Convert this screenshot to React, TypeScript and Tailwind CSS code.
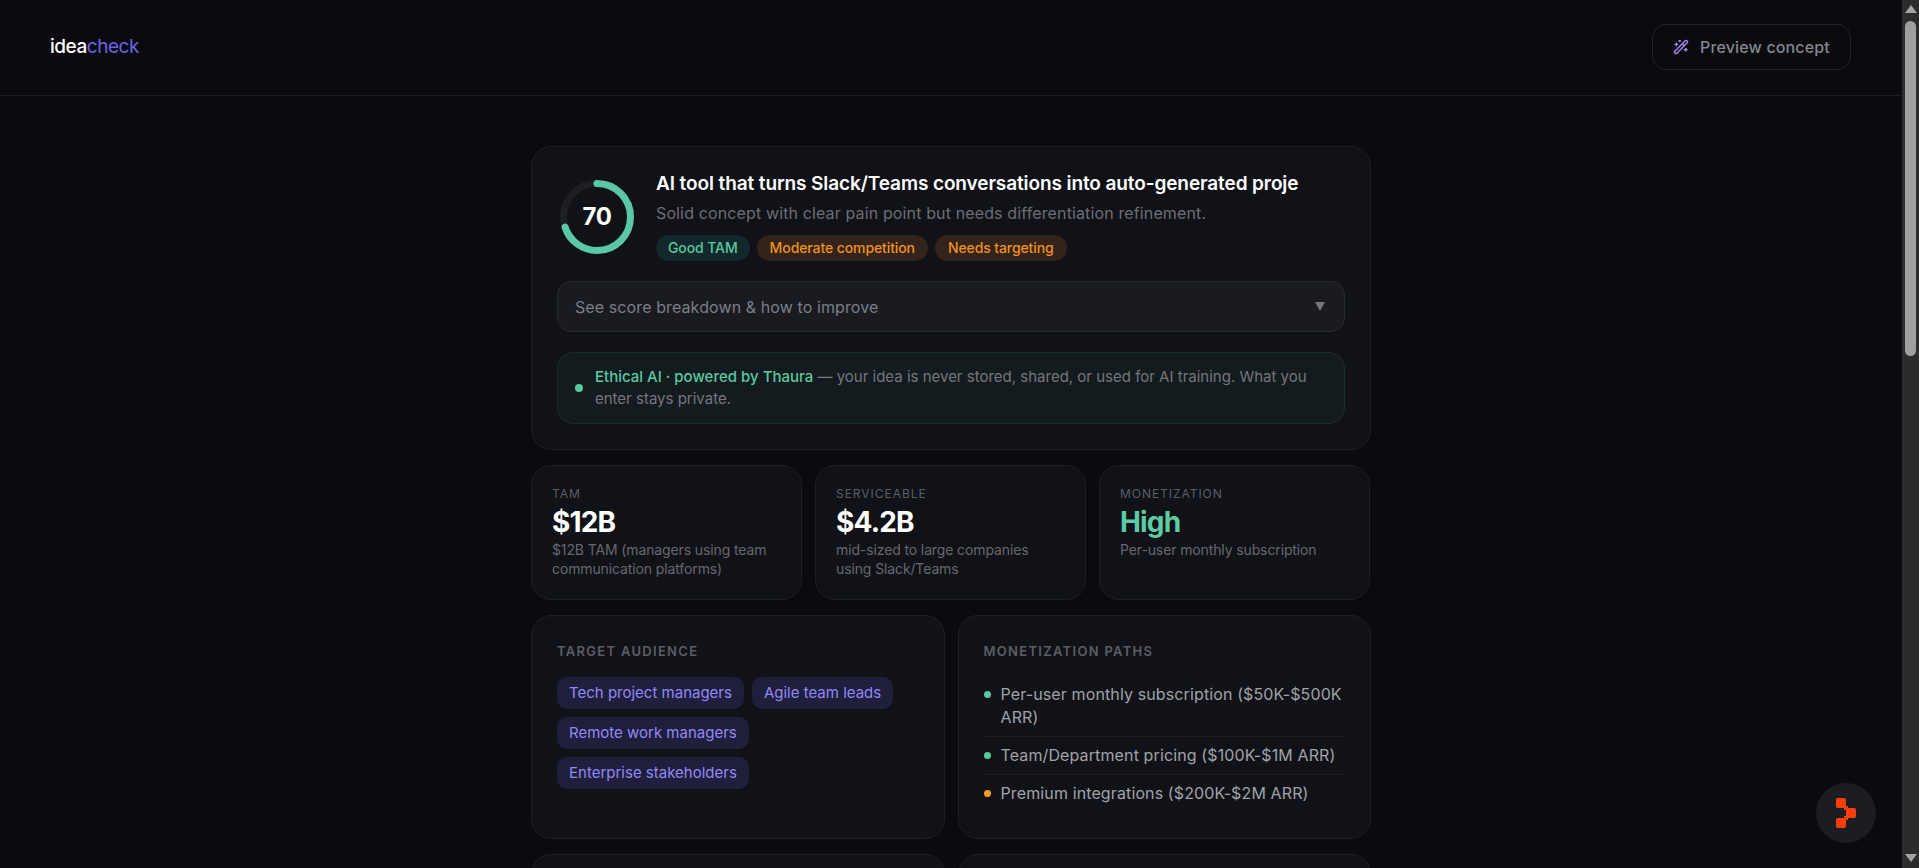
import { WandSparkles } from "lucide-react";

const card = "rounded-[20px] border border-[#1e2027] bg-[#111217]";
const sectionLabel = "text-[13px] font-semibold uppercase leading-[15px] tracking-[0.1em] text-[#5c5e66]";

function Stat({ label, value, note, green }: { label: string; value: string; note: string; green?: boolean }) {
  return (
    <div className={`${card} h-[135px] px-5 pt-[20px]`}>
      <div className="text-[12px] font-normal uppercase leading-[16px] tracking-[0.08em] text-[#5c5e66]">{label}</div>
      <div className={`mt-[4px] text-[28px] font-bold leading-[32px] tracking-[-0.03em] ${green ? "text-[#5ccba5]" : "text-white"}`}>{value}</div>
      <div className="mt-[2px] text-[14px] leading-[19px] tracking-[-0.12px] text-[#66686f]">{note}</div>
    </div>
  );
}

function Tag({ children }: { children: string }) {
  return <span className="rounded-[10px] bg-[#201f3b] px-3 py-[6px] text-[15px] leading-[20px] text-[#9188f7]">{children}</span>;
}

function Path({ text, color, last }: { text: string; color: string; last?: boolean }) {
  return (
    <div className={`flex items-start gap-[10px] py-[7px] ${last ? "" : "border-b border-[#1c1e24]"}`}>
      <span className={`mt-[8px] h-[7px] w-[7px] shrink-0 rounded-full ${color}`} />
      <span className="text-[16px] leading-[23px] tracking-[0.12px] text-[#a0a2a8]">{text}</span>
    </div>
  );
}

function Scrollbar() {
  return (
    <div className="fixed inset-y-0 right-0 flex w-[17px] flex-col items-center bg-[#2c2c2c]">
      <span className="mt-[5px] h-0 w-0 border-x-[6px] border-b-[8px] border-x-transparent border-b-[#a3a3a3]" />
      <span className="mt-[8px] h-[335px] w-[11px] rounded-full bg-[#9f9f9f]" />
      <span className="mt-auto mb-[6px] h-0 w-0 border-x-[6px] border-t-[8px] border-x-transparent border-t-[#a3a3a3]" />
    </div>
  );
}

export default function App() {
  return (
    <div className="min-h-[2150px] bg-[#0a0a0f] pr-[17px] font-['Inter',sans-serif]">
      <header className="flex h-[96px] items-center justify-between border-b border-[#1c1d23] pl-[50px] pr-[51px]">
        <div className="text-[19px] font-medium tracking-[-0.025em] text-white">
          idea<span className="font-normal text-[#6c63e6]">check</span>
        </div>
        <button className="mb-[1px] flex h-[46px] w-[199px] items-center justify-center gap-[11px] rounded-[14px] border border-[#24252c] text-[16px] font-medium tracking-[0.15px] text-[#85868c]">
          <WandSparkles size={16} className="text-[#a78bfa]" />
          Preview concept
        </button>
      </header>

      <main className="mx-auto flex w-[840px] flex-col gap-[15px] pt-[50px]">
        <section className={`${card} h-[304px] px-[25px] pt-[33px]`}>
          <div className="flex gap-[22px] pl-[3px]">
            <div className="relative h-[74px] w-[74px] shrink-0">
              <svg viewBox="0 0 74 74" className="h-[74px] w-[74px] -rotate-90">
                <circle cx="37" cy="37" r="33.5" fill="none" stroke="#1d1f25" strokeWidth="7" />
                <circle cx="37" cy="37" r="33.5" fill="none" stroke="#5ac8a6" strokeWidth="7" strokeLinecap="round" strokeDasharray="147.3 210.5" />
              </svg>
              <div className="absolute inset-0 flex items-center justify-center text-[24px] font-bold tracking-[-0.02em] text-white">70</div>
            </div>
            <div className="-mt-[11px] min-w-0">
              <h1 className="whitespace-nowrap text-[19px] font-semibold leading-[30px] tracking-[-0.1px] text-white">AI tool that turns Slack/Teams conversations into auto-generated proje</h1>
              <p className="mt-[3px] text-[16px] leading-[22px] tracking-[0.13px] text-[#6b6d75]">Solid concept with clear pain point but needs differentiation refinement.</p>
              <div className="mt-[11px] flex gap-[7px]">
                <span className="rounded-full bg-[#12282a] px-3 py-[4px] text-[14px] font-medium leading-[18px] tracking-[-0.1px] text-[#58c9a2]">Good TAM</span>
                <span className="rounded-full bg-[#32241a] px-[13px] py-[4px] text-[14px] font-medium leading-[18px] tracking-[-0.1px] text-[#f0911f]">Moderate competition</span>
                <span className="rounded-full bg-[#32241a] px-[13px] py-[4px] text-[14px] font-medium leading-[18px] tracking-[-0.1px] text-[#f0911f]">Needs targeting</span>
              </div>
            </div>
          </div>
          <div className="mt-[20px] flex h-[51px] items-center justify-between rounded-[14px] border border-[#282a31] bg-[#1a1b21] pl-[17px] pr-[19px]">
            <span className="text-[16px] tracking-[0.1px] text-[#7c7e85]">See score breakdown &amp; how to improve</span>
            <span className="h-0 w-0 border-x-[5.5px] border-t-[9px] border-x-transparent border-t-[#75777d]" />
          </div>
          <div className="mt-[20px] flex h-[72px] items-center gap-[12px] rounded-[16px] border border-[#173029] bg-[#141b1e] pl-[17px] pr-[20px]">
            <span className="h-[8px] w-[8px] shrink-0 rounded-full bg-[#58c9a2]" />
            <p className="text-[15px] leading-[22px] text-[#74767c]">
              <span className="font-medium text-[#58c9a2]">Ethical AI · powered by Thaura</span> — your idea is never stored, shared, or used for AI training. What you enter stays private.
            </p>
          </div>
        </section>

        <section className="grid w-[839px] grid-cols-3 gap-[13px]">
          <Stat label="TAM" value="$12B" note="$12B TAM (managers using team communication platforms)" />
          <Stat label="Serviceable" value="$4.2B" note="mid-sized to large companies using Slack/Teams" />
          <Stat label="Monetization" value="High" note="Per-user monthly subscription" green />
        </section>

        <section className="grid grid-cols-2 gap-[13px]">
          <div className={`${card} h-[224px] px-[25px] pt-[28px]`}>
            <div className={sectionLabel}>Target audience</div>
            <div className="mt-[18px] flex flex-wrap gap-2">
              <Tag>Tech project managers</Tag>
              <Tag>Agile team leads</Tag>
              <Tag>Remote work managers</Tag>
              <Tag>Enterprise stakeholders</Tag>
            </div>
          </div>
          <div className={`${card} h-[224px] px-[25px] pt-[28px]`}>
            <div className={sectionLabel}>Monetization paths</div>
            <div className="mt-[17px]">
              <Path text="Per-user monthly subscription ($50K-$500K ARR)" color="bg-[#58c9a2]" />
              <Path text="Team/Department pricing ($100K-$1M ARR)" color="bg-[#58c9a2]" />
              <Path text="Premium integrations ($200K-$2M ARR)" color="bg-[#f5a025]" last />
            </div>
          </div>
        </section>

        <section className="grid grid-cols-2 gap-[13px]">
          <div className={`${card} h-[224px]`} />
          <div className={`${card} h-[224px]`} />
        </section>
      </main>

      <div className="fixed bottom-[25px] right-[43px] flex h-[60px] w-[60px] items-center justify-center rounded-full bg-[#1b1d22]">
        <svg viewBox="0 0 20 30" className="h-[30px] w-[20px]">
          <rect x="0" y="0" width="10" height="10" rx="2" fill="#fa3e0a" />
          <rect x="10" y="10" width="10" height="10" rx="2" fill="#fa3e0a" />
          <rect x="0" y="20" width="10" height="10" rx="2" fill="#fa3e0a" />
          <rect x="8" y="8" width="4" height="4" fill="#fa3e0a" />
          <rect x="8" y="18" width="4" height="4" fill="#fa3e0a" />
        </svg>
      </div>
      <Scrollbar />
    </div>
  );
}
